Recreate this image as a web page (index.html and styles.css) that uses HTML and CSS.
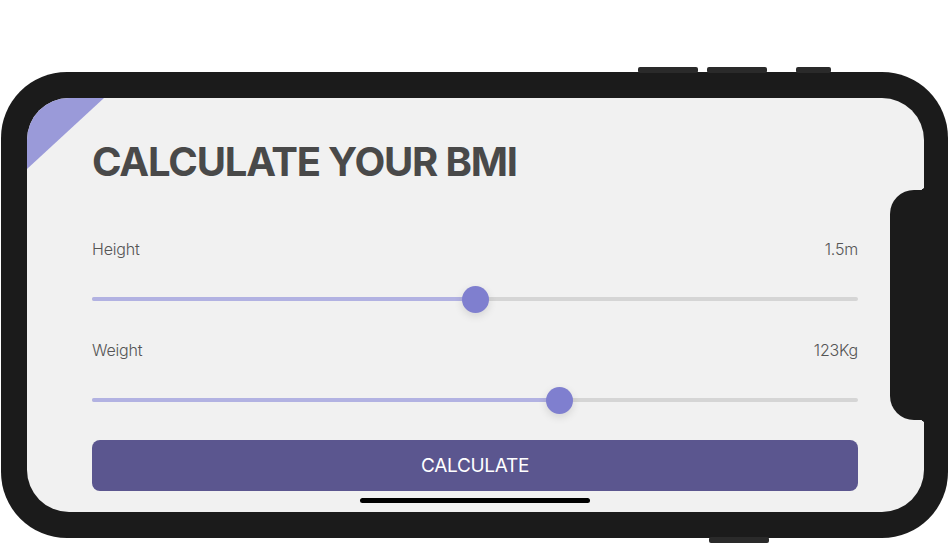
FILE: index.html
```html
<!DOCTYPE html>
<html lang="en">
<head>
<meta charset="utf-8">
<title>BMI Calculator</title>
<link rel="stylesheet" href="styles.css">
</head>
<body>
<div class="phone">
  <span class="hw-btn hw-top1"></span>
  <span class="hw-btn hw-top2"></span>
  <span class="hw-btn hw-top3"></span>
  <span class="hw-btn hw-bottom"></span>
  <div class="screen">
    <div class="corner"></div>
    <h1 class="title">CALCULATE YOUR BMI</h1>
    <div class="field">
      <div class="field-head"><span>Height</span><span>1.5m</span></div>
      <div class="slider">
        <div class="track"><div class="fill" style="width:50%"></div><div class="thumb" style="left:50%"></div></div>
      </div>
    </div>
    <div class="field">
      <div class="field-head"><span>Weight</span><span>123Kg</span></div>
      <div class="slider">
        <div class="track"><div class="fill" style="width:61%"></div><div class="thumb" style="left:61%"></div></div>
      </div>
    </div>
    <button class="calc-btn">CALCULATE</button>
    <div class="home-indicator"></div>
  </div>
  <div class="notch"></div>
</div>
</body>
</html>
```
FILE: styles.css
```css
* { box-sizing: border-box; }
html, body { margin: 0; padding: 0; background: #ffffff; }
body {
  font-family: Inter, "Noto Sans", "Liberation Sans", sans-serif;
  padding-top: 72px;
  width: 950px;
  height: 548px;
  overflow: hidden;
}
.phone {
  position: relative;
  margin-left: 1px;
  width: 947px;
  height: 466px;
  background: #1b1b1b;
  border-radius: 66px;
  padding: 26px 24px 26px 26px;
}
.hw-btn {
  position: absolute;
  background: #2a2a2a;
  height: 6px;
  border-radius: 2px;
}
.hw-top1 { top: -5px; left: 637px; width: 60px; }
.hw-top2 { top: -5px; left: 706px; width: 60px; }
.hw-top3 { top: -5px; left: 795px; width: 35px; }
.hw-bottom { bottom: -5px; left: 708px; width: 60px; }
.screen {
  position: relative;
  width: 897px;
  height: 414px;
  background: #f1f1f1;
  border-radius: 42px;
  overflow: hidden;
  padding: 39px 66px 0 65px;
  display: flex;
  flex-direction: column;
}
.corner {
  position: absolute;
  left: 0;
  top: 0;
  width: 77px;
  height: 71px;
  background: #9a9ad9;
  clip-path: polygon(0 0, 100% 0, 0 100%);
}
.title {
  margin: 0;
  font-size: 40px;
  line-height: 50px;
  font-weight: 700;
  color: #494949;
  letter-spacing: -1.2px;
}
.field { margin-top: 52px; }
.field + .field { margin-top: 28px; }
.field-head {
  display: flex;
  justify-content: space-between;
  font-size: 16px;
  line-height: 20px;
  font-weight: 300;
  color: #555555;
  letter-spacing: -0.2px;
}
.slider {
  margin-top: 27px;
  height: 26px;
  display: flex;
  align-items: center;
}
.track {
  position: relative;
  width: 100%;
  height: 4px;
  border-radius: 2px;
  background: #d5d5d5;
}
.fill {
  height: 100%;
  border-radius: 2px;
  background: #b2b2e2;
}
.thumb {
  position: absolute;
  top: 50%;
  width: 27px;
  height: 27px;
  margin: -13.5px 0 0 -13.5px;
  border-radius: 50%;
  background: #7f7fcf;
  box-shadow: 0 3px 8px rgba(0, 0, 0, 0.12);
}
.calc-btn {
  margin-top: 27px;
  height: 51px;
  width: 100%;
  border: none;
  border-radius: 8px;
  background: #5b568f;
  color: #ffffff;
  font-family: Inter, "Noto Sans", "Liberation Sans", sans-serif;
  font-size: 19px;
  font-weight: 400;
  letter-spacing: -0.3px;
  padding: 0;
}
.home-indicator {
  align-self: center;
  margin-top: 7px;
  width: 230px;
  height: 5px;
  border-radius: 3px;
  background: #000000;
}
.notch {
  position: absolute;
  left: 889px;
  top: 118px;
  width: 45px;
  height: 230px;
  background: #1b1b1b;
  border-radius: 24px 0 0 24px;
}
.notch::before,
.notch::after {
  content: "";
  position: absolute;
  right: 10px;
  width: 6px;
  height: 6px;
}
.notch::before {
  top: -6px;
  background: radial-gradient(circle at 0 0, transparent 6px, #1b1b1b 6.5px);
}
.notch::after {
  bottom: -6px;
  background: radial-gradient(circle at 0 100%, transparent 6px, #1b1b1b 6.5px);
}
```
